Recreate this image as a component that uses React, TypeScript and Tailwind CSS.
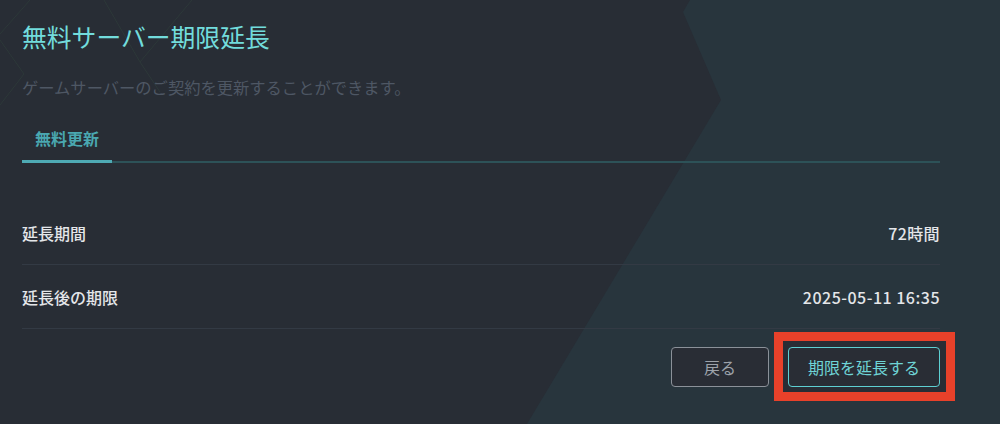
import React from "react";

export default function App() {
  return (
    <div
      className="relative w-[1000px] h-[424px] overflow-hidden bg-[#282d35]"
      style={{ fontFamily: '"Noto Sans CJK JP", "Noto Sans", sans-serif' }}
    >
      <svg className="absolute inset-0" width="1000" height="424" viewBox="0 0 1000 424">
        <polygon points="690,0 683,12 721,100 527,424 1000,424 1000,0" fill="#28353d" />
        <g stroke="#2e3a3a" strokeWidth="1" fill="none" opacity="0.9">
          <line x1="30" y1="0" x2="0" y2="34" />
          <line x1="0" y1="40" x2="24" y2="74" />
          <line x1="24" y1="74" x2="0" y2="105" />
          <line x1="104" y1="0" x2="140" y2="62" />
          <line x1="140" y1="62" x2="192" y2="0" />
          <line x1="140" y1="62" x2="160" y2="92" />
        </g>
      </svg>

      <div className="relative flex flex-col pl-[22px] pr-[60px] pt-[18px]">
        <h1 className="text-[24.8px] leading-[36px] text-[#72dcdc] font-normal">
          無料サーバー期限延長
        </h1>
        <p className="mt-[21px] text-[16.3px] leading-[24px] text-[#4e5764]">
          ゲームサーバーのご契約を更新することができます。
        </p>

        <div className="mt-[27px] flex border-b-2 border-[#2d5258]">
          <div className="-mb-[2px] pb-[10px] border-b-[3px] border-[#4eaab4] text-[16px] leading-[24px] font-semibold text-[#4aa8b1] w-[90px] text-center">
            無料更新
          </div>
        </div>

        <div className="mt-[38px] flex flex-col">
          <div className="h-[64px] flex items-center justify-between border-b border-[#333a44] text-[16px] font-medium text-[#e4e6e9]">
            <span>延長期間</span>
            <span className="tracking-[0.4px]">72時間</span>
          </div>
          <div className="h-[64px] flex items-center justify-between border-b border-[#333a44] text-[16px] font-medium text-[#e4e6e9]">
            <span>延長後の期限</span>
            <span className="tracking-[0.5px]">2025-05-11 16:35</span>
          </div>
        </div>

        <div className="mt-[18px] flex justify-end gap-[19px]">
          <button className="w-[98px] h-[40px] rounded-[4px] border border-[#8b9199] bg-[#292d35] text-[16px] text-[#9ca2aa]">
            戻る
          </button>
          <div className="relative">
            <span className="absolute -left-[14px] -right-[15px] -top-[15px] -bottom-[14px] border-[9px] border-[#e8412a] bg-[#292d35]" />
            <button className="relative w-[152px] h-[40px] rounded-[4px] border border-[#5ecfd2] bg-[#292d35] text-[16px] text-[#6fd4d6]">
              期限を延長する
            </button>
          </div>
        </div>
      </div>
    </div>
  );
}
